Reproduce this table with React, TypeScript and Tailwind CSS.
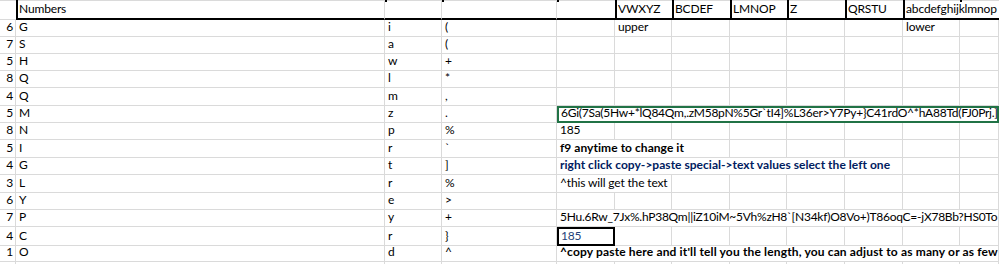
import React from "react";

const GRID =
  "grid grid-cols-[16px_369px_57px_115px_58px_57px_58px_57px_58px_58px_57px_39px]";

const nums = [6, 7, 5, 8, 4, 5, 8, 5, 4, 3, 6, 7, 4, 1];
const letters = ["G", "S", "H", "Q", "Q", "M", "N", "I", "G", "L", "Y", "P", "C", "O"];
const lowers = ["i", "a", "w", "l", "m", "z", "p", "r", "t", "r", "e", "y", "r", "d"];
const syms = ["(", "(", "+", "*", ",", ".", "%", "`", "]", "%", ">", "+", "}", "^"];
const heights = [
  "h-[17px]", "h-[17px]", "h-[17px]", "h-[17px]", "h-[18px]", "h-[17px]", "h-[17px]",
  "h-[18px]", "h-[17px]", "h-[18px]", "h-[17px]", "h-[17px]", "h-[18px]", "h-[17px]",
];

const cell =
  "border-r border-b border-[#dadada] flex items-end pl-[3px] pb-[2px] whitespace-nowrap leading-[14px] min-w-0";

function Empty({ n }: { n: number }) {
  return (
    <>
      {Array.from({ length: n }).map((_, i) => (
        <div key={i} className={cell} />
      ))}
    </>
  );
}

function RightSide({ i }: { i: number }) {
  switch (i) {
    case 0:
      return (
        <>
          <div className={cell} />
          <div className={cell}>upper</div>
          <Empty n={4} />
          <div className={cell}>lower</div>
          <div className={cell} />
        </>
      );
    case 5:
      return (
        <div className="col-span-8 border-2 border-[#217346] flex items-end pl-[2px] pb-[1px] whitespace-nowrap leading-[14px] overflow-hidden tracking-[-0.25px]">
          6Gi(7Sa(5Hw+*lQ84Qm,.zM58pN%5Gr`tI4]%L36er&gt;Y7Py+{"}"}C41rdO^*hA88Td(FJ0Prj.]
        </div>
      );
    case 6:
      return (
        <>
          <div className={cell}>185</div>
          <Empty n={7} />
        </>
      );
    case 7:
      return (
        <>
          <div className={`${cell} col-span-3 font-bold tracking-[0.05px]`}>f9 anytime to change it</div>
          <Empty n={5} />
        </>
      );
    case 8:
      return (
        <>
          <div className={`${cell} col-span-6 font-bold text-[#002060] tracking-[0.03px]`}>
            right click copy-&gt;paste special-&gt;text values select the left one
          </div>
          <Empty n={2} />
        </>
      );
    case 9:
      return (
        <>
          <div className={`${cell} col-span-2`}>^this will get the text</div>
          <Empty n={6} />
        </>
      );
    case 11:
      return (
        <div className={`${cell} col-span-8 overflow-hidden tracking-[-0.25px]`}>
          5Hu.6Rw_7Jx%.hP38Qm||iZ10iM~5Vh%zH8`[N34kf)O8Vo+)T86oqC=-jX78Bb?HS0To
        </div>
      );
    case 12:
      return (
        <>
          <div className="border-2 border-black flex items-end pl-[2px] pb-[1px] leading-[14px] text-[#1f3f7a]">
            185
          </div>
          <Empty n={7} />
        </>
      );
    case 13:
      return (
        <div className={`${cell} col-span-8 font-bold overflow-hidden tracking-[0.15px]`}>
          ^copy paste here and it'll tell you the length, you can adjust to as many or as few
        </div>
      );
    default:
      return <Empty n={8} />;
  }
}

export default function App() {
  return (
    <div className="w-[999px] h-[264px] overflow-hidden bg-white text-black text-[12px] tracking-[-0.15px] font-[Lato,sans-serif]">
      {/* top strip: tail of the row above */}
      <div className={`${GRID} h-[1px] bg-[#dadada]`}>
        <div />
        {Array.from({ length: 11 }).map((_, i) => (
          <div key={i} className="border-l-2 border-black -mb-[1px] h-[2px]" />
        ))}
      </div>
      {/* header row */}
      <div className={`${GRID} h-[19px]`}>
        <div className="border-b border-[#dadada]" />
        <div className="border-l-2 border-black border-r border-r-[#dadada] border-b-2 border-b-black flex items-end pl-[1px] pb-[2px] leading-[14px]">
          Numbers
        </div>
        <div className="border-r border-r-[#dadada] border-b-2 border-b-black" />
        <div className="border-r border-r-[#dadada] border-b-2 border-b-black" />
        <div className="border-b-2 border-b-black" />
        {["VWXYZ", "BCDEF", "LMNOP", "Z", "QRSTU"].map((t) => (
          <div
            key={t}
            className="border-l-2 border-l-black border-b-2 border-b-black flex items-end pl-[1px] pb-[2px] leading-[14px] whitespace-nowrap"
          >
            {t}
          </div>
        ))}
        <div className="col-span-2 border-l-2 border-l-black border-b-2 border-b-black flex items-end pl-[1px] pb-[2px] leading-[14px] whitespace-nowrap overflow-hidden">
          abcdefghijklmnop
        </div>
      </div>
      {/* data rows */}
      {nums.map((n, i) => (
        <div key={i} className={`${GRID} ${heights[i]}`}>
          <div className="border-r border-b border-[#dadada] flex items-end justify-end pr-[2px] pb-[2px] leading-[14px]">
            {n}
          </div>
          <div className={cell}>{letters[i]}</div>
          <div className={cell}>{lowers[i]}</div>
          <div className={cell}>{syms[i]}</div>
          <RightSide i={i} />
        </div>
      ))}
      <div className={`${GRID} h-[17px]`}>
        <div className="border-r border-[#dadada]" />
        <div className="border-r border-[#dadada]" />
        <div className="border-r border-[#dadada]" />
        <div className="border-r border-[#dadada]" />
        <Empty n={8} />
      </div>
    </div>
  );
}
